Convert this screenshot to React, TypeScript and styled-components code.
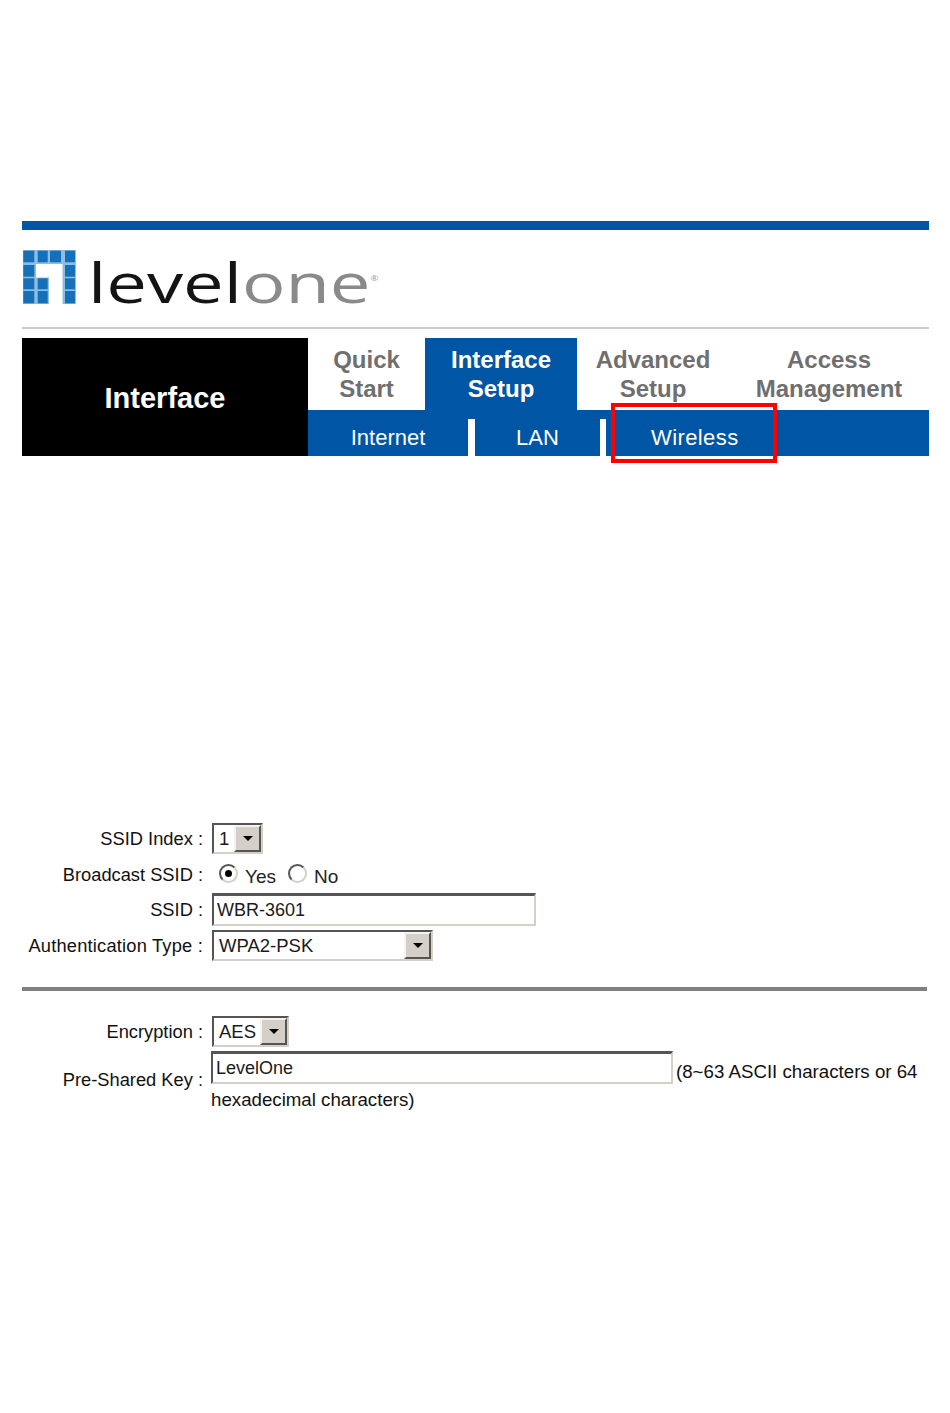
import React from 'react'
import styled, { createGlobalStyle } from 'styled-components'

const GlobalStyle = createGlobalStyle`
  html, body {
    margin: 0;
    padding: 0;
    background: #fff;
    font-family: 'Liberation Sans', Arial, sans-serif;
  }
`
const Page = styled.div`
  width: 950px;
  height: 1413px;
  box-sizing: border-box;
  padding: 221px 21px 0 22px;
  overflow: hidden;
`
const TopBar = styled.div`
  height: 9px;
  background: #0055a5;
`
const LogoRow = styled.div`
  height: 97px;
  box-sizing: border-box;
  padding: 20px 0 0 1px;
  display: flex;
  align-items: flex-start;
  gap: 12px;
`
const LogoWord = styled.div`
  font-family: 'Open Sans', sans-serif;
  font-weight: 400;
  font-size: 54px;
  line-height: 60px;
  margin-top: 2px;
  color: #141414;
  white-space: nowrap;
  transform: scaleX(1.34);
  transform-origin: left top;
`
const LogoGrey = styled.span`
  color: #8a8a8a;
`
const Trademark = styled.sup`
  font-size: 7px;
  line-height: 7px;
  color: #999;
  vertical-align: 22px;
`
const Rule = styled.div`
  height: 2px;
  background: #cccccc;
  margin-bottom: 9px;
`
const Nav = styled.div`
  display: flex;
  height: 118px;
`
const Section = styled.div`
  width: 286px;
  background: #000;
  color: #fff;
  font-weight: 700;
  font-size: 29px;
  display: flex;
  align-items: center;
  justify-content: center;
  padding-top: 2px;
  box-sizing: border-box;
`
const NavBody = styled.div`
  flex: 1;
  position: relative;
`
const Tabs = styled.div`
  height: 72px;
  display: grid;
  grid-template-columns: 117px 152px 152px 1fr;
`
const Tab = styled.div<{ $active?: boolean }>`
  background: ${p => (p.$active ? '#0055a5' : '#fff')};
  color: ${p => (p.$active ? '#fff' : '#6f6f6f')};
  font-weight: 700;
  font-size: 24px;
  line-height: 29px;
  text-align: center;
  padding-top: 7px;
  box-sizing: border-box;
`
const SubNav = styled.div`
  height: 46px;
  background: #0055a5;
  display: grid;
  grid-template-columns: 160px 7px 125px 6px 1fr;
`
const SubItem = styled.div`
  color: #fff;
  font-size: 22px;
  line-height: 28px;
  text-align: center;
  padding-top: 14px;
  box-sizing: border-box;
`
const WirelessLabel = styled(SubItem)`
  text-align: left;
  padding-left: 45px;
  letter-spacing: 0.4px;
`
const SubGap = styled.div`
  background: #fff;
  margin-top: 9px;
`
const Highlight = styled.div`
  position: absolute;
  left: 303px;
  top: 65px;
  width: 166px;
  height: 60px;
  box-sizing: border-box;
  border: 4px solid #ff0000;
`
const Form = styled.div`
  margin-top: 367px;
`
const FormRow = styled.div<{ $height: number; $gap?: number }>`
  display: grid;
  grid-template-columns: 181px 1fr;
  column-gap: 9px;
  align-items: center;
  height: ${p => p.$height}px;
  margin-bottom: ${p => p.$gap ?? 0}px;
  font-size: 18.3px;
  color: #111;
`
const Label = styled.div<{ $wide?: boolean }>`
  text-align: right;
  white-space: nowrap;
  letter-spacing: ${p => (p.$wide ? '0.2px' : '0')};
`
const SelectBox = styled.div<{ $width: number }>`
  width: ${p => p.$width}px;
  height: 31px;
  box-sizing: border-box;
  display: flex;
  border: 2px solid;
  border-color: #555 #d4d0c8 #d4d0c8 #555;
  background: #fff;
  font-size: 18.5px;
`
const SelectValue = styled.div`
  flex: 1;
  padding-left: 5px;
  line-height: 27px;
  color: #1a1a1a;
`
const SelectButton = styled.div`
  width: 27px;
  background: #d4d0c8;
  border: 2px solid;
  border-color: #f4f3ef #555 #555 #f4f3ef;
  box-sizing: border-box;
  display: flex;
  align-items: center;
  justify-content: center;
`
const Arrow = styled.div`
  width: 0;
  height: 0;
  border-style: solid;
  border-width: 5px 5px 0 5px;
  border-color: #000 transparent transparent transparent;
`
const RadioGroup = styled.div`
  display: flex;
  align-items: flex-start;
  padding-left: 7px;
`
const Radio = styled.div<{ $checked?: boolean }>`
  width: 19px;
  height: 19px;
  box-sizing: border-box;
  border-radius: 50%;
  border: 2px solid;
  border-color: #555 #d4d0c8 #d4d0c8 #555;
  background: #fff;
  display: flex;
  align-items: center;
  justify-content: center;
  margin-top: 4px;
  &::after {
    content: '';
    display: ${p => (p.$checked ? 'block' : 'none')};
    width: 7px;
    height: 7px;
    border-radius: 50%;
    background: #000;
  }
`
const RadioText = styled.span`
  font-size: 19px;
  line-height: 24px;
  margin: 5px 12px 0 7px;
  color: #222;
`
const TextField = styled.input<{ $width: number; $negative?: number }>`
  width: ${p => p.$width}px;
  height: 33px;
  box-sizing: border-box;
  border: 2px solid;
  border-top-width: 3px;
  border-color: #555 #d4d0c8 #d4d0c8 #555;
  padding: 0 0 0 3px;
  margin: 0 0 ${p => p.$negative ?? 0}px;
  font-family: inherit;
  font-size: 18px;
  color: #1a1a1a;
  outline: none;
  vertical-align: top;
`
const Divider = styled.div`
  height: 4px;
  width: 905px;
  background: #808080;
  margin: 26px 0 25px;
`
const KeyValue = styled.div`
  align-self: start;
  line-height: 28px;
  margin-left: -1px;
  font-size: 18.7px;
`
const Hint = styled.span`
  margin-left: 3px;
  position: relative;
  top: 7px;
`

function Select({ value, width }: { value: string; width: number }) {
  return (
    <SelectBox $width={width}>
      <SelectValue>{value}</SelectValue>
      <SelectButton><Arrow /></SelectButton>
    </SelectBox>
  )
}

const LOGO_COLS = [[0.3, 11], [14.7, 10], [27, 11], [42, 10]]
const LOGO_ROWS = [[0.7, 11.6], [15, 11.7], [28.3, 11], [41, 12.3]]
const LOGO_CELLS = [
  [0, 0], [1, 0], [2, 0], [3, 0],
  [0, 1], [3, 1],
  [0, 2], [1, 2], [3, 2],
  [0, 3], [1, 3], [3, 3],
]

function LogoMark() {
  return (
    <svg width="53" height="54" viewBox="0 0 53 54">
      <path d="M0 0H53V54H39.500V14H26V54H0Z" fill="#8fbde0" />
      {LOGO_CELLS.map(([c, r]) => (
        <rect
          key={`${c}-${r}`}
          x={LOGO_COLS[c][0]}
          y={LOGO_ROWS[r][0]}
          width={LOGO_COLS[c][1]}
          height={LOGO_ROWS[r][1]}
          fill="#1470b8"
        />
      ))}
      <rect x="13" y="14" width="13" height="13.500" fill="#fff" />
    </svg>
  )
}

function App() {
  return (
    <Page>
      <GlobalStyle />
      <TopBar />
      <LogoRow>
        <LogoMark />
        <LogoWord>
          level<LogoGrey>one</LogoGrey><Trademark>®</Trademark>
        </LogoWord>
      </LogoRow>
      <Rule />
      <Nav>
        <Section>Interface</Section>
        <NavBody>
          <Tabs>
            <Tab>Quick<br />Start</Tab>
            <Tab $active>Interface<br />Setup</Tab>
            <Tab>Advanced<br />Setup</Tab>
            <Tab>Access<br />Management</Tab>
          </Tabs>
          <SubNav>
            <SubItem>Internet</SubItem>
            <SubGap />
            <SubItem>LAN</SubItem>
            <SubGap />
            <WirelessLabel>Wireless</WirelessLabel>
          </SubNav>
          <Highlight />
        </NavBody>
      </Nav>
      <Form>
        <FormRow $height={31} $gap={4}>
          <Label>SSID Index :</Label>
          <Select value="1" width={51} />
        </FormRow>
        <FormRow $height={33} $gap={2}>
          <Label>Broadcast SSID :</Label>
          <RadioGroup>
            <Radio $checked />
            <RadioText>Yes</RadioText>
            <Radio />
            <RadioText>No</RadioText>
          </RadioGroup>
        </FormRow>
        <FormRow $height={33} $gap={4}>
          <Label>SSID :</Label>
          <TextField $width={324} readOnly value="WBR-3601" />
        </FormRow>
        <FormRow $height={31}>
          <Label $wide>Authentication Type :</Label>
          <Select value="WPA2-PSK" width={221} />
        </FormRow>
        <Divider />
        <FormRow $height={31} $gap={4}>
          <Label>Encryption :</Label>
          <Select value="AES" width={77} />
        </FormRow>
        <FormRow $height={58}>
          <Label>Pre-Shared Key :</Label>
          <KeyValue>
            <TextField $width={462} $negative={-5} readOnly value="LevelOne" />
            <Hint>(8~63 ASCII characters or 64 hexadecimal characters)</Hint>
          </KeyValue>
        </FormRow>
      </Form>
    </Page>
  )
}

export default App
